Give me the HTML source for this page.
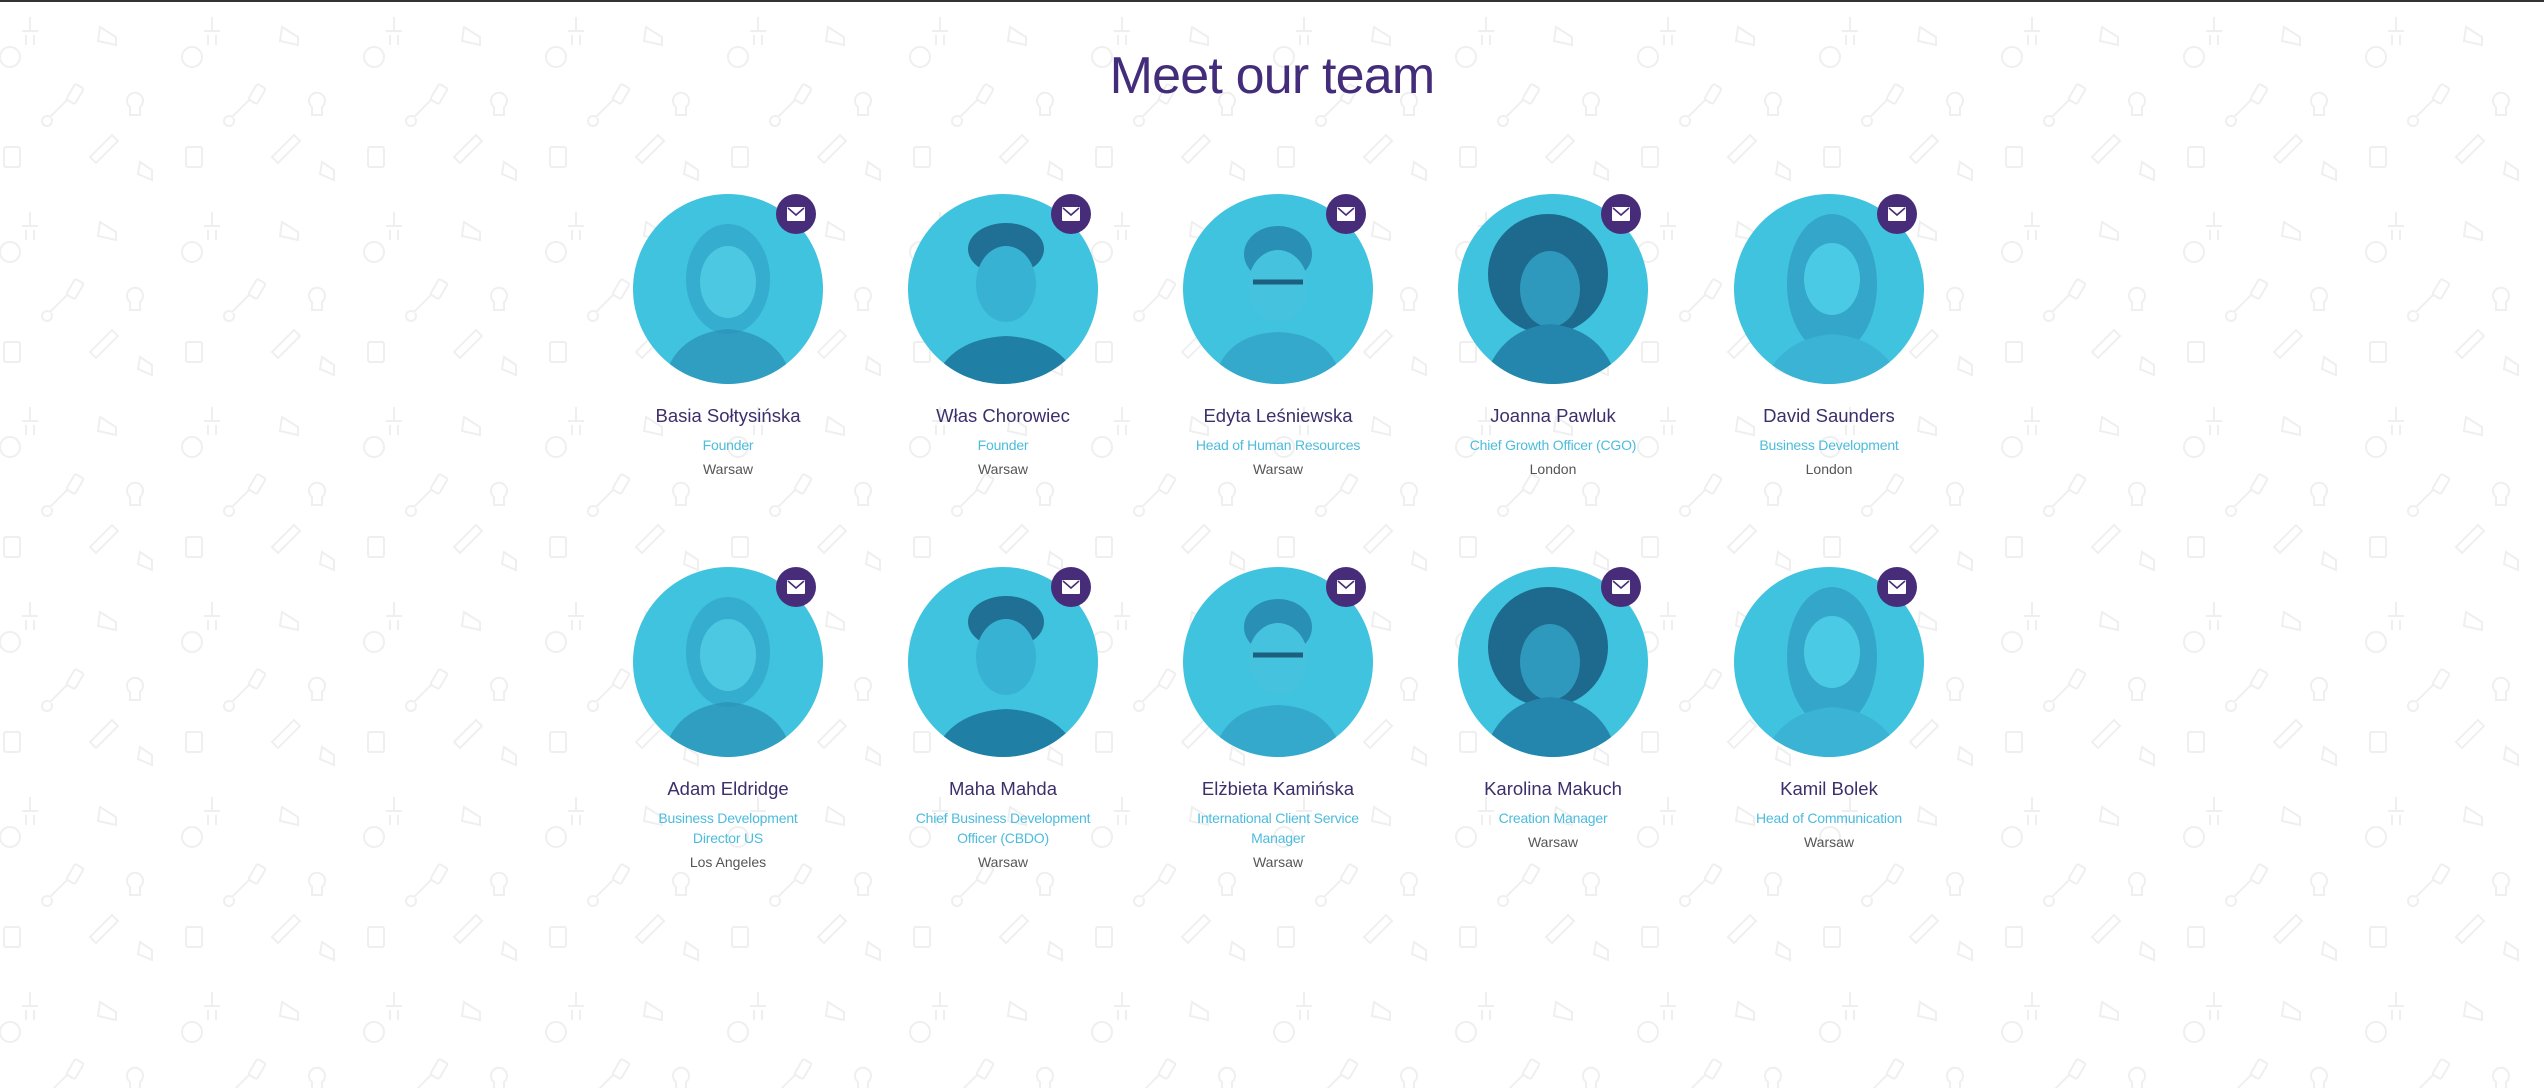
<!DOCTYPE html>
<html><head><meta charset="utf-8">
<style>
html,body{margin:0;padding:0}
body{width:2544px;height:1086px;overflow:hidden;background:#fff;position:relative;font-family:"Liberation Sans",sans-serif;border-top:2px solid #333;box-sizing:border-box}
.bg{position:absolute;left:0;top:0;width:2544px;height:1086px}
h1{position:absolute;left:0;width:2544px;top:44px;margin:0;text-align:center;font-weight:400;font-size:52px;color:#432c7a;letter-spacing:-0.8px}
.card{position:absolute;width:270px;text-align:center}
.ph{position:relative;width:190px;height:190px;margin:0 auto;border-radius:50%;background:#40c3de;overflow:visible}
.ph svg{position:absolute;left:0;top:0;border-radius:50%}
.mail{position:absolute;left:143px;top:0px;width:40px;height:40px;border-radius:50%;background:#472c7a}
.mail svg{position:absolute;left:11px;top:13px;border-radius:0}
.name{margin-top:20px;font-size:18.5px;color:#3d2f6b;line-height:24px}
.role{margin-top:7px;font-size:14px;color:#4cbcdc;line-height:20px;letter-spacing:-0.2px}
.city{margin-top:4px;font-size:14px;color:#555;line-height:20px}
</style></head><body>
<svg class="bg" width="2544" height="1086">
<defs><pattern id="p" width="182" height="195" patternUnits="userSpaceOnUse" x="-10" y="-5">
<g fill="none" stroke="#efefef" stroke-width="2">
<circle cx="20" cy="60" r="10"/>
<path d="M40 20 v14 M32 34 h16 M36 38 v10 M44 38 v10"/>
<path d="M110 30 l16 10 v8 l-18 -4z"/>
<rect x="80" y="88" width="10" height="18" rx="2" transform="rotate(30 85 97)"/>
<path d="M140 110 a8 8 0 1 1 10 0 v8 h-10z"/>
<path d="M60 120 l18 -18 M60 120 a5 5 0 1 0 1 1"/>
<rect x="14" y="150" width="16" height="20" rx="2"/>
<path d="M100 160 l22 -22 l6 6 l-22 22z"/>
<path d="M150 165 l12 8 v10 l-14 -6z"/>
</g></pattern></defs>
<rect width="2544" height="1086" fill="url(#p)"/>
</svg>
<h1>Meet our team</h1>

<div id="cards"></div>
<script>
var d=[["Basia Sołtysińska","Founder","Warsaw",0],["Włas Chorowiec","Founder","Warsaw",1],["Edyta Leśniewska","Head of Human Resources","Warsaw",2],["Joanna Pawluk","Chief Growth Officer (CGO)","London",3],["David Saunders","Business Development","London",4],
["Adam Eldridge","Business Development<br>Director US","Los Angeles",0],["Maha Mahda","Chief Business Development<br>Officer (CBDO)","Warsaw",1],["Elżbieta Kamińska","International Client Service<br>Manager","Warsaw",2],["Karolina Makuch","Creation Manager","Warsaw",3],["Kamil Bolek","Head of Communication","Warsaw",4]];
var cx=[728,1003,1278,1553,1829];
var faces=[
'<ellipse cx="95" cy="85" rx="42" ry="55" fill="#2e9ec4" opacity=".6"/><ellipse cx="95" cy="88" rx="28" ry="36" fill="#4cc8e2"/><path d="M30 190 q10-50 65-55 q55 5 65 55z" fill="#2a8fb5" opacity=".7"/>',
'<ellipse cx="98" cy="55" rx="38" ry="26" fill="#1f7094"/><ellipse cx="98" cy="90" rx="30" ry="38" fill="#38b2d3"/><path d="M25 190 q15-45 73-48 q58 3 73 48z" fill="#1f7fa5"/>',
'<ellipse cx="95" cy="60" rx="34" ry="28" fill="#2a8fb5"/><ellipse cx="95" cy="92" rx="30" ry="36" fill="#45c2dd"/><path d="M70 88 h50" stroke="#1d5f7e" stroke-width="5"/><path d="M30 190 q10-50 65-52 q55 2 65 52z" fill="#35a9cc"/>',
'<circle cx="90" cy="80" r="60" fill="#1d6a8e"/><ellipse cx="92" cy="95" rx="30" ry="38" fill="#2f98bd"/><path d="M25 190 q15-55 67-60 q55 5 68 60z" fill="#2586ad"/>',
'<ellipse cx="98" cy="90" rx="45" ry="70" fill="#33a6c9"/><ellipse cx="98" cy="85" rx="28" ry="36" fill="#4acae4"/><path d="M30 190 q15-45 68-50 q55 5 68 50z" fill="#3ab3d4"/>'];
var h='';
d.forEach(function(p,i){var r=i<5?0:1;var c=cx[i%5];var top=r?565:192;
h+='<div class="card" style="left:'+(c-135)+'px;top:'+top+'px"><div class="ph"><svg width="190" height="190">'+faces[p[3]]+'</svg><div class="mail"><svg width="18" height="14" viewBox="0 0 18 14"><rect width="18" height="14" rx="1" fill="#fff"/><path d="M1 1 L9 8 L17 1" fill="none" stroke="#472c7a" stroke-width="1.6"/></svg></div></div><div class="name">'+p[0]+'</div><div class="role">'+p[1]+'</div><div class="city">'+p[2]+'</div></div>';});
document.getElementById('cards').innerHTML=h;
</script>
</body></html>
